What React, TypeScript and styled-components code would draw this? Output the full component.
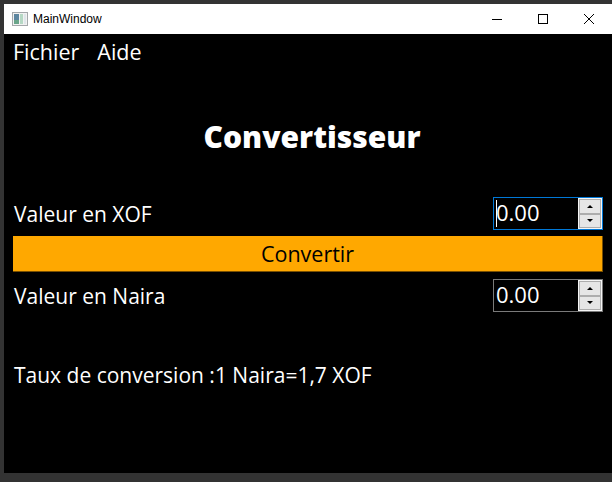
import React from "react";
import styled, { createGlobalStyle } from "styled-components";

const GlobalStyle = createGlobalStyle`
  html, body {
    margin: 0;
    padding: 0;
    background: #333333;
  }
`;

const TEXT_FONT = `"Comic Sans MS", "Open Sans", "DejaVu Sans", sans-serif`;

export default function App() {
  return (
    <>
      <GlobalStyle />
      <Frame>
        <TitleBar>
          <AppIcon viewBox="0 0 16 14">
            <rect x="0.5" y="0.5" width="15" height="13" fill="#f2f2f2" stroke="#a3a7aa" />
            <rect x="2" y="2" width="5" height="10" fill="#5d86a0" />
            <rect x="2" y="8" width="5" height="4" fill="#6aa58a" />
            <rect x="8" y="2" width="3" height="10" fill="#b5d8c4" />
            <rect x="12" y="2" width="2" height="10" fill="#dfe6ea" />
          </AppIcon>
          <WindowTitle>MainWindow</WindowTitle>
          <WindowButtons>
            <WindowButton>
              <svg width="10" height="10" viewBox="0 0 10 10">
                <path d="M0 5.5H10" stroke="#000" fill="none" />
              </svg>
            </WindowButton>
            <WindowButton>
              <svg width="10" height="10" viewBox="0 0 10 10">
                <rect x="0.5" y="0.5" width="9" height="9" stroke="#000" fill="none" />
              </svg>
            </WindowButton>
            <WindowButton>
              <svg width="10" height="10" viewBox="0 0 10 10">
                <path d="M0 0L10 10M10 0L0 10" stroke="#000" fill="none" />
              </svg>
            </WindowButton>
          </WindowButtons>
        </TitleBar>
        <Content>
          <MenuBar>
            <MenuItem>Fichier</MenuItem>
            <MenuItem>Aide</MenuItem>
          </MenuBar>
          <Heading>Convertisseur</Heading>
          <Row $top={42}>
            <Label>Valeur en XOF</Label>
            <SpinBox value="0.00" focused />
          </Row>
          <ConvertButton>Convertir</ConvertButton>
          <Row $top={7}>
            <Label>Valeur en Naira</Label>
            <SpinBox value="0.00" />
          </Row>
          <RateText>Taux de conversion :1 Naira=1,7 XOF</RateText>
        </Content>
      </Frame>
    </>
  );
}

function SpinBox({ value, focused }: { value: string; focused?: boolean }) {
  return (
    <SpinFrame $focused={focused}>
      <SpinValue>
        {focused && <Caret />}
        {value}
      </SpinValue>
      <SpinButtons>
        <SpinButton>
          <svg width="6" height="3" viewBox="0 0 6 3">
            <path d="M3 0L6 3H0Z" fill="#000" />
          </svg>
        </SpinButton>
        <SpinButton>
          <svg width="6" height="3" viewBox="0 0 6 3">
            <path d="M0 0H6L3 3Z" fill="#000" />
          </svg>
        </SpinButton>
      </SpinButtons>
    </SpinFrame>
  );
}

const Frame = styled.div`
  width: 612px;
  height: 482px;
  box-sizing: border-box;
  padding: 4px 0 9px 4px;
  background: #333333;
  display: flex;
  flex-direction: column;
  overflow: hidden;
`;

const TitleBar = styled.div`
  height: 30px;
  flex: none;
  background: #ffffff;
  display: flex;
  align-items: center;
  padding-left: 8px;
`;

const AppIcon = styled.svg`
  width: 16px;
  height: 14px;
  flex: none;
`;

const WindowTitle = styled.div`
  margin-left: 5px;
  font-family: "Liberation Sans", Arial, sans-serif;
  font-size: 12px;
  color: #000000;
`;

const WindowButtons = styled.div`
  margin-left: auto;
  display: flex;
  height: 100%;
`;

const WindowButton = styled.div`
  width: 46px;
  display: flex;
  align-items: center;
  justify-content: center;
`;

const Content = styled.div`
  flex: 1;
  background: #000000;
  color: #ffffff;
  font-family: ${TEXT_FONT};
  padding: 0 9px 0 9px;
`;

const MenuBar = styled.div`
  display: flex;
  gap: 18px;
  height: 36px;
  align-items: center;
`;

const MenuItem = styled.div`
  font-size: 21.5px;
  line-height: 24px;
`;

const Heading = styled.h1`
  margin: 49px 0 0;
  padding-left: 8px;
  text-align: center;
  font-size: 30px;
  line-height: 36px;
  font-weight: 800;
`;

const Row = styled.div<{ $top: number }>`
  margin-top: ${(p) => p.$top}px;
  display: flex;
  align-items: center;
  justify-content: space-between;
  height: 33px;
`;

const Label = styled.div`
  font-size: 21px;
  line-height: 24px;
  padding-left: 1px;
`;

const SpinFrame = styled.div<{ $focused?: boolean }>`
  width: 110px;
  height: 33px;
  box-sizing: border-box;
  border: 1px solid ${(p) => (p.$focused ? "#0078d7" : "#7a7a7a")};
  display: flex;
  background: #000000;
`;

const SpinValue = styled.div`
  flex: 1;
  position: relative;
  padding-left: 2px;
  font-size: 22px;
  line-height: 29px;
  color: #ffffff;
`;

const Caret = styled.span`
  position: absolute;
  left: 2px;
  top: 2px;
  width: 1px;
  height: 27px;
  background: #ffffff;
`;

const SpinButtons = styled.div`
  width: 24px;
  display: flex;
  flex-direction: column;
  background: #f5f5f5;
  padding: 1px;
  box-sizing: border-box;
`;

const SpinButton = styled.div`
  flex: 1;
  box-sizing: border-box;
  background: #e6e6e6;
  border: 1px solid #adadad;
  display: flex;
  align-items: center;
  justify-content: center;
`;

const ConvertButton = styled.button`
  display: block;
  width: 100%;
  height: 36px;
  margin: 6px 0 0;
  padding: 0;
  box-sizing: border-box;
  background: #ffa800;
  border: none;
  border-right: 1px solid #7a5000;
  border-bottom: 1px solid #7a5000;
  color: #000000;
  font-family: ${TEXT_FONT};
  font-size: 21.5px;
`;

const RateText = styled.div`
  margin-top: 51px;
  padding-left: 1px;
  font-size: 21px;
  line-height: 24px;
`;
